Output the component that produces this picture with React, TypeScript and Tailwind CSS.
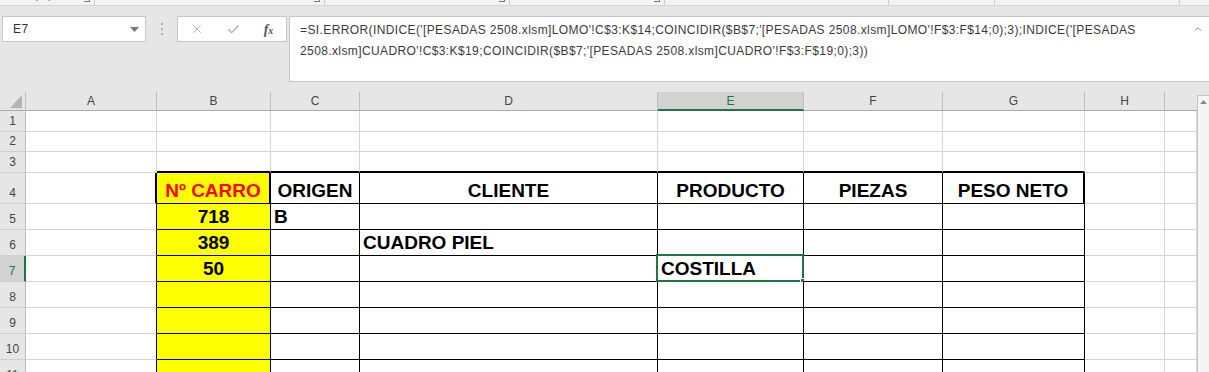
import { X, Check, ChevronUp } from 'lucide-react'

// column widths include the right gridline
const COLS = [
  { id: 'A', w: 'w-[131px]' },
  { id: 'B', w: 'w-[114px]' },
  { id: 'C', w: 'w-[89px]' },
  { id: 'D', w: 'w-[298px]' },
  { id: 'E', w: 'w-[146px]' },
  { id: 'F', w: 'w-[139px]' },
  { id: 'G', w: 'w-[142px]' },
  { id: 'H', w: 'w-[80px]' },
  { id: 'I', w: 'w-[32px]' },
]

const ROWS = [
  { n: 1, h: 'h-[21px]' },
  { n: 2, h: 'h-[20px]' },
  { n: 3, h: 'h-[21px]' },
  { n: 4, h: 'h-[31px]' },
  { n: 5, h: 'h-[26px]' },
  { n: 6, h: 'h-[26px]' },
  { n: 7, h: 'h-[26px]' },
  { n: 8, h: 'h-[26px]' },
  { n: 9, h: 'h-[26px]' },
  { n: 10, h: 'h-[26px]' },
  { n: 11, h: 'h-[26px]' },
]

type CellData = { text: string; left?: boolean; red?: boolean }

const DATA: Record<string, CellData> = {
  '4-1': { text: 'Nº CARRO', red: true },
  '4-2': { text: 'ORIGEN' },
  '4-3': { text: 'CLIENTE' },
  '4-4': { text: 'PRODUCTO' },
  '4-5': { text: 'PIEZAS' },
  '4-6': { text: 'PESO NETO' },
  '5-1': { text: '718' },
  '5-2': { text: 'B', left: true },
  '6-1': { text: '389' },
  '6-3': { text: 'CUADRO PIEL', left: true },
  '7-1': { text: '50' },
  '7-4': { text: 'COSTILLA', left: true },
}

// ribbon group labels: only their lowest pixels show in the picture
const RIBBON_GROUPS = [
  { w: 'w-[95px]', label: 'Portapapeles', launcher: true },
  { w: 'w-[230px]', label: 'Fuente', launcher: true },
  { w: 'w-[185px]', label: 'Alineación', launcher: true },
  { w: 'w-[155px]', label: 'Número', launcher: true },
  { w: 'w-[224px]', label: 'Estilos', launcher: false },
  { w: 'w-[106px]', label: 'Celdas', launcher: false },
  { w: 'w-[185px]', label: 'Edición', launcher: false },
  { w: 'w-[60px]', label: 'Análisis', launcher: false },
]

function cellBorders(r: number, ci: number) {
  const inTableCol = ci >= 1 && ci <= 6
  let right = 'border-r border-r-[#d4d4d4]'
  if (r >= 4 && (ci === 0 || inTableCol)) {
    right = r === 4 && (ci === 0 || ci === 1 || ci === 6) ? 'border-r-2 border-r-black' : 'border-r border-r-black'
  }
  let bottom = 'border-b border-b-[#d4d4d4]'
  if (inTableCol && r >= 3) {
    bottom = r === 3 ? 'border-b-2 border-b-black' : 'border-b border-b-black'
  }
  return `${right} ${bottom}`
}

export default function App() {
  return (
    <div className="w-[1209px] h-[372px] overflow-hidden bg-[#e6e6e6] font-['Liberation_Sans',Arial,sans-serif] text-[#333]">
      {/* ribbon strip */}
      <div className="h-[6px] bg-[#f3f3f3] border-b border-b-[#d5d5d5] flex overflow-hidden">
        {RIBBON_GROUPS.map((g) => (
          <div key={g.label} className={`${g.w} shrink-0 h-[5px] flex border-r border-r-[#d0d0d0]`}>
            <span className="flex-1 text-center text-[11px] leading-[11px] -mt-[10px] text-[#666]">{g.label}</span>
            {g.launcher && <span className="w-[6px] h-[2px] mr-[4px] border-r border-b border-[#777]" />}
          </div>
        ))}
      </div>

      {/* formula bar */}
      <div className="h-[86px] pt-[10px] pl-[2px] flex items-start">
        <div className="w-[144px] h-[26px] shrink-0 bg-white border border-[#c6c6c6] flex items-center pl-[10px] pr-[6px]">
          <span className="flex-1 text-[12px] tracking-[0.4px] text-[#333]">E7</span>
          <svg width="9" height="5" viewBox="0 0 9 5">
            <polygon points="0,0 9,0 4.5,5" fill="#777" />
          </svg>
        </div>
        <div className="w-[31px] h-[26px] shrink-0 flex flex-col items-center justify-center gap-[3px]">
          <span className="w-[2px] h-[2px] bg-[#b0b0b0]" />
          <span className="w-[2px] h-[2px] bg-[#b0b0b0]" />
          <span className="w-[2px] h-[2px] bg-[#b0b0b0]" />
        </div>
        <div className="w-[110px] h-[26px] shrink-0 bg-white border border-[#c6c6c6] flex items-center">
          <span className="w-[38px] flex justify-center">
            <X size={14} strokeWidth={1.5} color="#a8a8a8" />
          </span>
          <span className="w-[35px] flex justify-center">
            <Check size={15} strokeWidth={1.8} color="#a8a8a8" />
          </span>
          <span className="w-[35px] flex justify-center font-['Liberation_Serif',serif] italic font-bold text-[14px] text-[#555]">
            f<span className="text-[10px] mt-[4px]">x</span>
          </span>
        </div>
        <div className="ml-[2px] w-[921px] h-[66px] shrink-0 bg-white border border-r-0 border-[#c6c6c6] flex">
          <div className="flex-1 pl-[10px] pt-[3px] text-[12px] leading-[21px] tracking-[0.39px] text-[#3a3a3a] whitespace-nowrap">
            =SI.ERROR(INDICE('[PESADAS 2508.xlsm]LOMO'!C$3:K$14;COINCIDIR($B$7;'[PESADAS 2508.xlsm]LOMO'!F$3:F$14;0);3);INDICE('[PESADAS
            <br />
            2508.xlsm]CUADRO'!C$3:K$19;COINCIDIR($B$7;'[PESADAS 2508.xlsm]CUADRO'!F$3:F$19;0);3))
          </div>
          <div className="w-[24px] pt-[6px] flex justify-center">
            <ChevronUp size={12} strokeWidth={2} color="#888" />
          </div>
        </div>
      </div>

      {/* sheet */}
      <div className="flex">
        <div className="w-[1197px] shrink-0">
          {/* column headers */}
          <div className="flex h-[19px]">
            <div className="w-[26px] shrink-0 border-r border-r-[#bdbdbd] border-b border-b-[#ababab] flex items-end justify-end pr-[3px] pb-[2px]">
              <svg width="12" height="13" viewBox="0 0 12 13">
                <polygon points="12,0 12,13 0,13" fill="#b4b4b4" />
              </svg>
            </div>
            {COLS.map((c) => (
              <div
                key={c.id}
                className={`${c.w} shrink-0 flex items-center justify-center text-[12px] ${
                  c.id === 'E'
                    ? 'bg-[#d2d2d2] text-[#217346] border-b-2 border-b-[#217346] border-r border-r-[#bdbdbd]'
                    : c.id === 'I'
                      ? 'text-[#444] border-b border-b-[#ababab]'
                      : 'text-[#444] border-b border-b-[#ababab] border-r border-r-[#bdbdbd]'
                }`}
              >
                {c.id === 'I' ? '' : c.id}
              </div>
            ))}
          </div>

          {/* rows */}
          {ROWS.map((r) => (
            <div key={r.n} className={`flex ${r.h}`}>
              <div
                className={`w-[26px] shrink-0 flex items-end justify-center pb-[2px] leading-[16px] text-[12px] border-b border-b-[#cfcfcf] ${
                  r.n === 7
                    ? 'bg-[#d2d2d2] text-[#217346] border-r-2 border-r-[#217346]'
                    : 'bg-[#e6e6e6] text-[#444] border-r border-r-[#bdbdbd]'
                }`}
              >
                {r.n}
              </div>
              {COLS.map((c, ci) => {
                const d = DATA[`${r.n}-${ci}`]
                const yellow = ci === 1 && r.n >= 4
                const selected = r.n === 7 && ci === 4
                return (
                  <div
                    key={c.id}
                    className={`${c.w} shrink-0 relative flex items-end pb-[2px] ${cellBorders(r.n, ci)} ${
                      yellow ? 'bg-[#ffff00]' : 'bg-white'
                    } ${d && !d.left ? 'justify-center' : 'pl-[3px]'}`}
                  >
                    {d && (
                      <span
                        className={`text-[19px] leading-[20px] font-bold whitespace-nowrap ${
                          d.red ? 'text-[#ff0000]' : 'text-black'
                        }`}
                      >
                        {d.text}
                      </span>
                    )}
                    {selected && (
                      <div className="absolute -top-[2px] -left-[2px] -right-[1px] -bottom-[1px] border-2 border-[#217346]">
                        <span className="absolute -right-[4px] -bottom-[4px] w-[6px] h-[6px] bg-[#217346] border border-white" />
                      </div>
                    )}
                  </div>
                )
              })}
            </div>
          ))}
        </div>

        {/* vertical scrollbar */}
        <div className="w-[12px] shrink-0 pt-[3px]">
          <div className="h-[300px] bg-[#f5f5f5] border-l border-t border-[#c6c6c6] flex justify-center pt-[4px]">
            <svg width="7" height="4" viewBox="0 0 7 4">
              <polygon points="0,4 7,4 3.5,0" fill="#888" />
            </svg>
          </div>
        </div>
      </div>
    </div>
  )
}
